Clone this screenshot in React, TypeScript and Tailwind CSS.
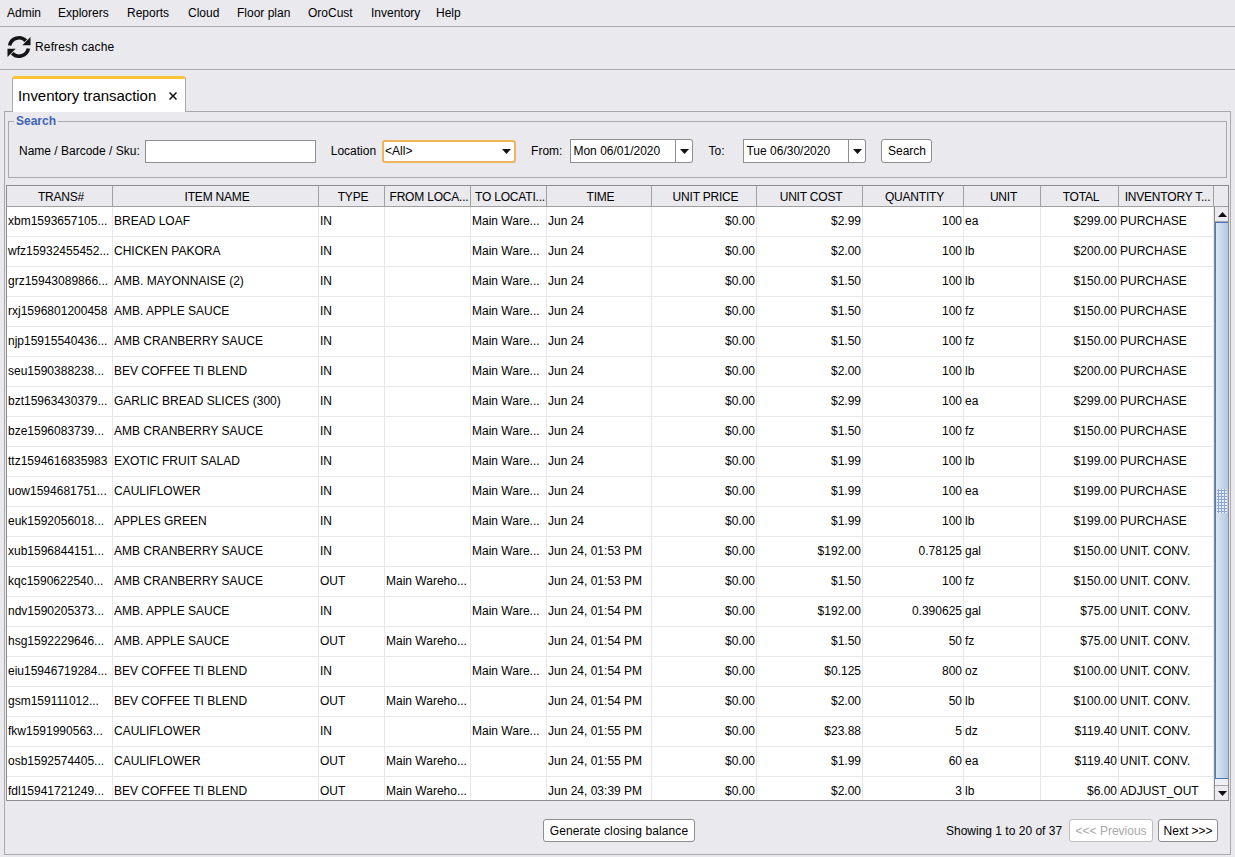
const menus = [
  { label: "Admin", width: "w-[51px]" },
  { label: "Explorers", width: "w-[69px]" },
  { label: "Reports", width: "w-[61px]" },
  { label: "Cloud", width: "w-[49px]" },
  { label: "Floor plan", width: "w-[71px]" },
  { label: "OroCust", width: "w-[63px]" },
  { label: "Inventory", width: "w-[65px]" },
  { label: "Help", width: "w-[40px]" },
];

const columns = [
  { label: "TRANS#", width: "w-[106px]" },
  { label: "ITEM NAME", width: "w-[206px]" },
  { label: "TYPE", width: "w-[66px]" },
  { label: "FROM LOCA...", width: "w-[86px]" },
  { label: "TO LOCATI...", width: "w-[76px]" },
  { label: "TIME", width: "w-[105px]" },
  { label: "UNIT PRICE", width: "w-[105px]" },
  { label: "UNIT COST", width: "w-[106px]" },
  { label: "QUANTITY", width: "w-[101px]" },
  { label: "UNIT", width: "w-[77px]" },
  { label: "TOTAL", width: "w-[78px]" },
  { label: "INVENTORY T...", width: "w-[95px]" },
];

const wh = "Main Wareho...";
const ware = "Main Ware...";

// trans, item, type, from, to, time, cost, qty, unit, total, kind
const rows = [
  ["xbm1593657105...", "BREAD LOAF", "IN", "", ware, "Jun 24", "$2.99", "100", "ea", "$299.00", "PURCHASE"],
  ["wfz15932455452...", "CHICKEN PAKORA", "IN", "", ware, "Jun 24", "$2.00", "100", "lb", "$200.00", "PURCHASE"],
  ["grz15943089866...", "AMB. MAYONNAISE (2)", "IN", "", ware, "Jun 24", "$1.50", "100", "lb", "$150.00", "PURCHASE"],
  ["rxj1596801200458", "AMB. APPLE SAUCE", "IN", "", ware, "Jun 24", "$1.50", "100", "fz", "$150.00", "PURCHASE"],
  ["njp15915540436...", "AMB CRANBERRY SAUCE", "IN", "", ware, "Jun 24", "$1.50", "100", "fz", "$150.00", "PURCHASE"],
  ["seu1590388238...", "BEV COFFEE TI BLEND", "IN", "", ware, "Jun 24", "$2.00", "100", "lb", "$200.00", "PURCHASE"],
  ["bzt15963430379...", "GARLIC BREAD SLICES (300)", "IN", "", ware, "Jun 24", "$2.99", "100", "ea", "$299.00", "PURCHASE"],
  ["bze1596083739...", "AMB CRANBERRY SAUCE", "IN", "", ware, "Jun 24", "$1.50", "100", "fz", "$150.00", "PURCHASE"],
  ["ttz1594616835983", "EXOTIC FRUIT SALAD", "IN", "", ware, "Jun 24", "$1.99", "100", "lb", "$199.00", "PURCHASE"],
  ["uow1594681751...", "CAULIFLOWER", "IN", "", ware, "Jun 24", "$1.99", "100", "ea", "$199.00", "PURCHASE"],
  ["euk1592056018...", "APPLES GREEN", "IN", "", ware, "Jun 24", "$1.99", "100", "lb", "$199.00", "PURCHASE"],
  ["xub1596844151...", "AMB CRANBERRY SAUCE", "IN", "", ware, "Jun 24, 01:53 PM", "$192.00", "0.78125", "gal", "$150.00", "UNIT. CONV."],
  ["kqc1590622540...", "AMB CRANBERRY SAUCE", "OUT", wh, "", "Jun 24, 01:53 PM", "$1.50", "100", "fz", "$150.00", "UNIT. CONV."],
  ["ndv1590205373...", "AMB. APPLE SAUCE", "IN", "", ware, "Jun 24, 01:54 PM", "$192.00", "0.390625", "gal", "$75.00", "UNIT. CONV."],
  ["hsg1592229646...", "AMB. APPLE SAUCE", "OUT", wh, "", "Jun 24, 01:54 PM", "$1.50", "50", "fz", "$75.00", "UNIT. CONV."],
  ["eiu15946719284...", "BEV COFFEE TI BLEND", "IN", "", ware, "Jun 24, 01:54 PM", "$0.125", "800", "oz", "$100.00", "UNIT. CONV."],
  ["gsm159111012...", "BEV COFFEE TI BLEND", "OUT", wh, "", "Jun 24, 01:54 PM", "$2.00", "50", "lb", "$100.00", "UNIT. CONV."],
  ["fkw1591990563...", "CAULIFLOWER", "IN", "", ware, "Jun 24, 01:55 PM", "$23.88", "5", "dz", "$119.40", "UNIT. CONV."],
  ["osb1592574405...", "CAULIFLOWER", "OUT", wh, "", "Jun 24, 01:55 PM", "$1.99", "60", "ea", "$119.40", "UNIT. CONV."],
  ["fdl15941721249...", "BEV COFFEE TI BLEND", "OUT", wh, "", "Jun 24, 03:39 PM", "$2.00", "3", "lb", "$6.00", "ADJUST_OUT"],
];

function Arrow({ up }: { up?: boolean }) {
  return (
    <svg width="9" height="5" viewBox="0 0 9 5" className={up ? "rotate-180" : ""}>
      <path d="M0 0h9L4.5 5z" fill="#111" />
    </svg>
  );
}

function RefreshIcon() {
  return (
    <svg width="24" height="24" viewBox="0 0 24 24" className="shrink-0">
      <path d="M2.6 10.5A9.5 9.5 0 0 1 18.8 5.8" fill="none" stroke="#151515" strokeWidth="3.6" />
      <path d="M23.5 2v8.2h-8.2z" fill="#151515" />
      <path d="M21.4 13.5A9.5 9.5 0 0 1 5.2 18.2" fill="none" stroke="#151515" strokeWidth="3.6" />
      <path d="M0.5 22v-8.2h8.2z" fill="#151515" />
    </svg>
  );
}

function DateField({ value }: { value: string }) {
  return (
    <div className="flex h-[24px] items-center">
      <div className="flex h-[24px] w-[106px] items-center border border-[#8e8e8e] bg-white pl-[2px]">{value}</div>
      <div className="flex h-[24px] w-[17px] items-center justify-center rounded-r-[3px] border border-l-0 border-[#8e8e8e] bg-white">
        <Arrow />
      </div>
    </div>
  );
}

function Cell({ text, right }: { text: string; right?: boolean }) {
  return (
    <td className={`h-[30px] overflow-hidden whitespace-nowrap border-r border-b border-[#e8e8e8] p-0 pb-[2px] ${right ? "pr-[1px] text-right" : "pl-[1px]"}`}>
      {text}
    </td>
  );
}

function ScrollBar() {
  return (
    <div className="flex h-full w-[15px] shrink-0 flex-col border-l border-[#8e8e8e] bg-[#f0f0f3]">
      <div className="flex h-[15px] shrink-0 items-center justify-center border-b border-[#a5a5a5] bg-[#eceaef]">
        <Arrow up />
      </div>
      <div className="flex h-[557px] shrink-0 items-center justify-center border border-[#4f76c0] bg-gradient-to-r from-[#dbe6f3] to-[#b3c8e2]">
        <div className="h-[24px] w-[10px] bg-[radial-gradient(#8aa5d0_1px,#e6edf7_1.4px)] bg-[length:3px_3px]" />
      </div>
      <div className="flex-1" />
      <div className="flex h-[15px] shrink-0 items-center justify-center border-t border-[#a5a5a5] bg-[#eceaef]">
        <Arrow />
      </div>
    </div>
  );
}

export default function App() {
  return (
    <div className="flex h-[857px] w-[1235px] flex-col overflow-hidden bg-[#eae9ee] font-['Liberation_Sans',Arial,sans-serif] text-xs text-black">
      {/* Menu bar */}
      <div className="flex h-[27px] shrink-0 items-center border-b border-[#a9a9a9] pl-[7px]">
        {menus.map((m) => (
          <span key={m.label} className={m.width}>
            {m.label}
          </span>
        ))}
      </div>

      {/* Toolbar */}
      <div className="flex h-[43px] shrink-0 items-center gap-[4px] border-b border-[#a9a9a9] pb-[2px] pl-[7px]">
        <RefreshIcon />
        <span className="tracking-[0.15px]">Refresh cache</span>
      </div>

      {/* Tabs */}
      <div className="mt-[6px] flex h-[35px] shrink-0 pl-[12px]">
        <div className="z-10 flex h-[36px] w-[174px] items-center rounded-t-[3px] border-x border-t-[3px] border-x-[#a9a9a9] border-t-[#fbc335] bg-white pl-[5px] text-[15px] tracking-[-0.05px]">
          <span>Inventory transaction</span>
          <svg width="8" height="8" viewBox="0 0 8 8" className="ml-[13px]">
            <path d="M0.5 0.5l7 7M7.5 0.5l-7 7" stroke="#111" strokeWidth="1.5" />
          </svg>
        </div>
      </div>

      <div className="mx-[4px] flex h-[744px] shrink-0 flex-col border border-[#a9a9a9]">
        {/* Search */}
        <fieldset className="mx-[3px] mt-[1px] h-[65px] shrink-0 border border-[#a9a9a9] px-[10px]">
          <legend className="-ml-[5px] px-[2px] font-bold text-[#3f63b5]">Search</legend>
          <div className="mt-[10px] flex items-center">
            <span>Name / Barcode / Sku:</span>
            <input className="ml-[5px] h-[23px] w-[171px] border border-[#8e8e8e] bg-white" />
            <span className="ml-[15px]">Location</span>
            <div className="ml-[6px] flex h-[23px] w-[134px] items-center justify-between rounded-[3px] border-2 border-[#f0b458] bg-white pl-[1px] pr-[3px]">
              <span>&lt;All&gt;</span>
              <Arrow />
            </div>
            <span className="ml-[15px] mr-[8px]">From:</span>
            <DateField value="Mon 06/01/2020" />
            <span className="ml-[15px] mr-[19px]">To:</span>
            <DateField value="Tue 06/30/2020" />
            <button className="ml-[15px] h-[24px] w-[51px] rounded-[3px] border border-[#8e8e8e] bg-white">Search</button>
          </div>
        </fieldset>

        {/* Table */}
        <div className="mx-[1px] mt-[7px] flex h-[616px] shrink-0 overflow-hidden border border-[#8e8e8e] bg-white">
          <div className="flex h-full w-[1207px] shrink-0 flex-col overflow-hidden">
            <table className="w-[1207px] table-fixed border-separate border-spacing-0">
              <colgroup>
                {columns.map((c) => (
                  <col key={c.label} className={c.width} />
                ))}
              </colgroup>
              <thead>
                <tr>
                  {columns.map((c) => (
                    <th key={c.label} className="h-[21px] overflow-hidden whitespace-nowrap border-r border-b border-[#a0a0a0] bg-[#eae9ee] p-0 pl-[3px] pt-[2px] text-center font-normal tracking-[-0.2px]">
                      {c.label}
                    </th>
                  ))}
                </tr>
              </thead>
              <tbody>
                {rows.map((r) => (
                  <tr key={r[0]}>
                    <Cell text={r[0]} />
                    <Cell text={r[1]} />
                    <Cell text={r[2]} />
                    <Cell text={r[3]} />
                    <Cell text={r[4]} />
                    <Cell text={r[5]} />
                    <Cell text="$0.00" right />
                    <Cell text={r[6]} right />
                    <Cell text={r[7]} right />
                    <Cell text={r[8]} />
                    <Cell text={r[9]} right />
                    <Cell text={r[10]} />
                  </tr>
                ))}
              </tbody>
            </table>
          </div>
          <div className="flex h-full flex-1 flex-col bg-[#eae9ee]">
            <div className="h-[21px] shrink-0 border-b border-[#a0a0a0]" />
            <div className="min-h-0 flex-1">
              <ScrollBar />
            </div>
          </div>
        </div>

        {/* Footer */}
        <div className="mt-[18px] flex items-center pl-[538px]">
          <button className="h-[23px] w-[152px] rounded-[3px] border border-[#8e8e8e] bg-white tracking-[0.1px]">Generate closing balance</button>
          <span className="ml-[251px]">Showing 1 to 20 of 37</span>
          <button className="ml-[7px] h-[23px] w-[84px] rounded-[3px] border border-[#bdbdbd] bg-white text-[#a8a8a8]">&lt;&lt;&lt; Previous</button>
          <button className="ml-[5px] h-[23px] w-[60px] rounded-[3px] border border-[#8e8e8e] bg-white">Next &gt;&gt;&gt;</button>
        </div>
      </div>
    </div>
  );
}
